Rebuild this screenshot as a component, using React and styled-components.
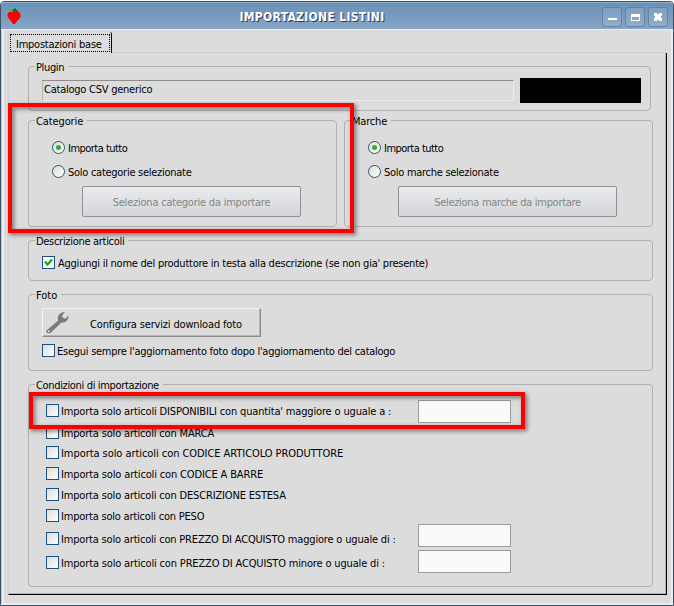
import { useState } from "react";
import styled, { createGlobalStyle } from "styled-components";

const conditions = [
  { id: "qty", label: "Importa solo articoli DISPONIBILI con quantita' maggiore o uguale a :", height: 23, gap: 0, ls: -0.16, field: true },
  { id: "brand", label: "Importa solo articoli con MARCA", height: 13, gap: 3, ls: -0.17 },
  { id: "code", label: "Importa solo articoli con CODICE ARTICOLO PRODUTTORE", height: 13, gap: 7, ls: -0.06 },
  { id: "barcode", label: "Importa solo articoli con CODICE A BARRE", height: 13, gap: 8, ls: -0.15 },
  { id: "desc", label: "Importa solo articoli con DESCRIZIONE ESTESA", height: 13, gap: 8, ls: -0.17 },
  { id: "weight", label: "Importa solo articoli con PESO", height: 13, gap: 8, ls: -0.2 },
  { id: "min", label: "Importa solo articoli con PREZZO DI ACQUISTO maggiore o uguale di :", height: 23, gap: 2, ls: -0.18, field: true, drop: 8 },
  { id: "max", label: "Importa solo articoli con PREZZO DI ACQUISTO minore o uguale di :", height: 23, gap: 3, ls: -0.16, field: true, drop: 6 },
];

function Strawberry() {
  return (
    <Logo width="14" height="16" viewBox="0 0 14 16">
      <path d="M2 4h10l1.5 2v3L12 11l-2 2-2 3H6l-2-3-2-2-1.5-3V6z" fill="#fe0000" />
      <path d="M5 2h1V1h2V0h1v2h2v2H9v1H8V4H5z" fill="#0c7a1c" />
      <path d="M2 2h3v1h1v1H3V3H2z" fill="#2bd32b" />
    </Logo>
  );
}

function Wrench() {
  return (
    <svg width="24" height="24" viewBox="0 0 24 24">
      <path
        d="M0 20 12 9.5C11 5 14 1 19 1L16 4.5l1 2.5 3 .5L22.5 4C23 8.500 20 12 15.500 11.500L4.500 22 1.500 22.500z"
        fill="#7b7b7b"
      />
      <circle cx="2.800" cy="20.200" r="1" fill="#dcdcdc" />
    </svg>
  );
}

function CheckRow({ label, checked, onChange, ls, gap }) {
  return (
    <Choice $gap={gap} onClick={onChange}>
      <CheckBox $on={checked}>
        {checked && (
          <svg width="9" height="9" viewBox="0 0 9 9">
            <path d="M1 3.5 3.5 6.500 8 1.500" fill="none" stroke="#21a121" strokeWidth="2.2" />
          </svg>
        )}
      </CheckBox>
      <Text $ls={ls} $drop={2}>{label}</Text>
    </Choice>
  );
}

function Picker({ title, titleLs, option, optionLs, button, buttonLs }) {
  const [all, setAll] = useState(true);

  return (
    <Group $height={107} $width={309}>
      <Legend $ls={titleLs}>{title}</Legend>
      <RadioList>
        <Choice $gap={3} onClick={() => setAll(true)}>
          <Radio>{all && <Dot />}</Radio>
          <Text $ls={-0.52} $drop={2}>Importa tutto</Text>
        </Choice>
        <Choice $gap={3} onClick={() => setAll(false)}>
          <Radio>{!all && <Dot />}</Radio>
          <Text $ls={optionLs} $drop={2}>{option}</Text>
        </Choice>
      </RadioList>
      <SelectButton disabled={all}>
        <Text $ls={buttonLs}>{button}</Text>
      </SelectButton>
    </Group>
  );
}

function App() {
  const [addBrand, setAddBrand] = useState(true);
  const [photos, setPhotos] = useState(false);
  const [active, setActive] = useState({});

  return (
    <>
      <GlobalStyle />
      <Window>
        <TitleBar>
          <Strawberry />
          <Title>IMPORTAZIONE LISTINI</Title>
          <WindowButtons>
            <WindowButton>
              <svg width="18" height="18"><path d="M5 10h9v2H5z" fill="#fff" /></svg>
            </WindowButton>
            <WindowButton>
              <svg width="18" height="18">
                <path d="M5 6h9v7H5zM6 9v3h7V9z" fill="#fff" fillRule="evenodd" />
              </svg>
            </WindowButton>
            <WindowButton>
              <svg width="18" height="18">
                <path d="M5 5h3v1h2V5h3v3h-1v2h1v3h-3v-1H8v1H5v-3h1V8H5z" fill="#fff" />
              </svg>
            </WindowButton>
          </WindowButtons>
        </TitleBar>
        <Body>
          <TabStrip>
            <Tab>
              <TabFocus>
                <Text $ls={-0.24}>Impostazioni base</Text>
              </TabFocus>
            </Tab>
            <TabLine />
          </TabStrip>
          <Panel>
            <Group $height={45} $width={623}>
              <Legend $ls={-0.35}>Plugin</Legend>
              <PluginRow>
                <PluginField>
                  <Text $ls={-0.24}>Catalogo CSV generico</Text>
                </PluginField>
                <BlackBox />
              </PluginRow>
            </Group>
            <Columns>
              <Picker
                title="Categorie"
                titleLs={-0.12}
                option="Solo categorie selezionate"
                optionLs={-0.27}
                button="Seleziona categorie da importare"
                buttonLs={-0.22}
              />
              <Picker
                title="Marche"
                titleLs={-0.2}
                option="Solo marche selezionate"
                optionLs={-0.28}
                button="Seleziona marche da importare"
                buttonLs={-0.3}
              />
            </Columns>
            <Group $height={41} $gap={13}>
              <Legend $ls={-0.3}>Descrizione articoli</Legend>
              <GroupBody $top={16}>
                <CheckRow
                  label="Aggiungi il nome del produttore in testa alla descrizione (se non gia' presente)"
                  checked={addBrand}
                  onChange={() => setAddBrand(!addBrand)}
                  ls={-0.24}
                  gap={3}
                />
              </GroupBody>
            </Group>
            <Group $height={77} $gap={13}>
              <Legend $ls={0}>Foto</Legend>
              <GroupBody $top={14}>
                <PhotoButton>
                  <Wrench />
                  <Text $ls={-0.16} $drop={4}>Configura servizi download foto</Text>
                </PhotoButton>
                <CheckRow
                  label="Esegui sempre l'aggiornamento foto dopo l'aggiornamento del catalogo"
                  checked={photos}
                  onChange={() => setPhotos(!photos)}
                  ls={-0.26}
                />
              </GroupBody>
            </Group>
            <Group $height={203} $gap={13}>
              <Legend $ls={-0.34}>Condizioni di importazione</Legend>
              <ConditionList>
                {conditions.map((c) => (
                  <Condition key={c.id} $height={c.height} $gap={c.gap} $drop={c.drop}>
                    <CheckRow
                      label={c.label}
                      ls={c.ls}
                      checked={!!active[c.id]}
                      onChange={() => setActive({ ...active, [c.id]: !active[c.id] })}
                    />
                    {c.field && <NumberField />}
                  </Condition>
                ))}
              </ConditionList>
            </Group>
          </Panel>
        </Body>
        <Highlight $x={8} $y={102} $w={346} $h={130} />
        <Highlight $x={29} $y={391} $w={496} $h={37} />
      </Window>
    </>
  );
}

const GlobalStyle = createGlobalStyle`
  * {
    box-sizing: border-box;
  }

  body {
    margin: 0;
    background: #fff;
    font-family: "DejaVu Sans Condensed", "DejaVu Sans", sans-serif;
    font-size: 11px;
    line-height: 13px;
    color: #000;
    overflow: hidden;
  }

  svg {
    display: block;
    flex: none;
  }
`;

const Window = styled.div`
  position: relative;
  display: flex;
  flex-direction: column;
  width: 674px;
  height: 605px;
  margin-top: 1px;
  border: 1px solid #3c5068;
  border-radius: 4px 4px 0 0;
  background: #dcdcdc;
`;

const TitleBar = styled.header`
  display: flex;
  align-items: center;
  height: 27px;
  padding: 2px 5px 0 6px;
  border-top: 1px solid #8db0cd;
  border-radius: 3px 3px 0 0;
  background: linear-gradient(#6b91b8, #87a5c4);
`;

const Logo = styled.svg`
  margin-bottom: 2px;
`;

const Title = styled.h1`
  flex: 1;
  margin: 1px 0 0 1px;
  font-size: 12px;
  font-weight: bold;
  letter-spacing: 0.32px;
  text-align: center;
  color: #fff;
  text-shadow: 1px 1px 0 #2b3d50;
`;

const WindowButtons = styled.div`
  display: flex;
  gap: 3px;
`;

const WindowButton = styled.button`
  width: 20px;
  height: 20px;
  padding: 0;
  border: 1px solid #6484a6;
  border-radius: 3px;
  background: linear-gradient(#7f9fc1, #92acca);
`;

const Body = styled.main`
  flex: 1;
  padding: 2px 6px 0 7px;
  border: solid #ececf2;
  border-width: 1px 2px 2px 0;
  box-shadow: inset 1px 0 0 #b4c8dc, inset 3px 0 0 #ececf2;
`;

const TabStrip = styled.div`
  display: flex;
  align-items: flex-end;
  height: 21px;
  width: 658px;
`;

const Tab = styled.div`
  width: 104px;
  height: 21px;
  padding: 2px 0 0 1px;
  border: solid #d0d0da;
  border-width: 0 0 0 1px;
  border-right: 1px solid #000;
  border-radius: 2px 2px 0 0;
`;

const TabFocus = styled.div`
  width: 100px;
  height: 18px;
  padding: 3px 0 0 5px;
  border: 1px dotted #000;
`;

const TabLine = styled.div`
  flex: 1;
  height: 1px;
  background: #d0d0da;
`;

const Panel = styled.section`
  width: 659px;
  height: 542px;
  padding: 13px 0 0 19px;
  border-left: 1px solid #d0d0da;
  border-right: 1px solid #000;
  border-bottom: 1px solid #000;
  box-shadow: inset -1px -1px 0 #b4b4b4;
`;

const Group = styled.section`
  width: ${(p) => p.$width || 625}px;
  height: ${(p) => p.$height}px;
  margin-top: ${(p) => p.$gap || 0}px;
  border: 1px solid #b0b0b0;
  border-radius: 4px;
`;

const Legend = styled.h2`
  width: fit-content;
  height: 13px;
  margin: -7px 0 0 6px;
  padding: 0 4px 0 1px;
  font-size: 11px;
  font-weight: normal;
  line-height: 15px;
  letter-spacing: ${(p) => p.$ls}px;
  background: #dcdcdc;
`;

const Text = styled.span`
  margin-top: ${(p) => p.$drop || 0}px;
  letter-spacing: ${(p) => p.$ls}px;
  white-space: nowrap;
`;

const PluginRow = styled.div`
  display: flex;
  gap: 6px;
  padding: 5px 0 0 13px;
`;

const PluginField = styled.div`
  width: 472px;
  height: 21px;
  margin-top: 2px;
  padding: 2px 0 0 1px;
  border: 1px solid #b4b4b4;
  border-top: 1px solid #8c8c8c;
  border-right-color: #ececf2;
  border-bottom-color: #ececf2;
`;

const BlackBox = styled.div`
  width: 121px;
  height: 25px;
  background: #000;
`;

const Columns = styled.div`
  display: flex;
  gap: 7px;
  margin-top: 9px;
`;

const RadioList = styled.div`
  display: flex;
  flex-direction: column;
  gap: 11px;
  padding: 14px 0 0 23px;
`;

const Choice = styled.label`
  display: flex;
  align-items: center;
  gap: ${(p) => p.$gap || 2}px;
  height: 13px;
`;

const Radio = styled.span`
  display: flex;
  align-items: center;
  justify-content: center;
  width: 13px;
  height: 13px;
  border: 1px solid #26547e;
  border-radius: 50%;
  background: linear-gradient(135deg, #dcdcd7, #fff);
`;

const Dot = styled.span`
  width: 5px;
  height: 5px;
  border-radius: 50%;
  background: #2fb02f;
`;

const CheckBox = styled.span`
  display: flex;
  align-items: center;
  justify-content: center;
  flex: none;
  width: 13px;
  height: 13px;
  border: 1px solid #1c5180;
  background: ${(p) => (p.$on ? "#fafafa" : "linear-gradient(135deg, #dcdcd7, #fff)")};
`;

const SelectButton = styled.button`
  display: block;
  width: 219px;
  height: 31px;
  margin: 8px 0 0 53px;
  padding: 1px 0 0;
  border: 1px solid #8e9196;
  border-radius: 2px;
  font: inherit;
  color: #858585;
  background: linear-gradient(#e9ebef, #d3d5d9);
`;

const GroupBody = styled.div`
  padding-left: 13px;
  margin-top: ${(p) => p.$top - 7}px;
`;

const PhotoButton = styled.button`
  display: flex;
  align-items: center;
  gap: 20px;
  width: 219px;
  height: 29px;
  margin-bottom: 7px;
  padding: 0 0 0 3px;
  border: 1px solid #f4f4f4;
  border-right: 1px solid #8a8a8a;
  border-bottom: 1px solid #8a8a8a;
  box-shadow: inset -1px -1px 0 #b4b4b4;
  font: inherit;
  color: #000;
  background: #dcdcdc;
`;

const ConditionList = styled.div`
  padding: 9px 0 0 17px;
`;

const Condition = styled.div`
  display: flex;
  justify-content: space-between;
  width: 465px;
  height: ${(p) => p.$height}px;
  margin-top: ${(p) => p.$gap}px;

  > label {
    margin-top: ${(p) => (p.$height > 13 ? p.$drop || 4 : 0)}px;
  }
`;

const NumberField = styled.input`
  width: 93px;
  height: 23px;
  padding: 0 3px;
  border: 1px solid #9b9b9b;
  background: #fafafa;
`;

const Highlight = styled.div`
  position: absolute;
  left: ${(p) => p.$x - 1}px;
  top: ${(p) => p.$y - 1}px;
  width: ${(p) => p.$w}px;
  height: ${(p) => p.$h}px;
  border: 4px solid #fe0000;
  filter: drop-shadow(2px 2px 2px rgba(0, 0, 0, 0.5));
  pointer-events: none;
`;

export default App;
